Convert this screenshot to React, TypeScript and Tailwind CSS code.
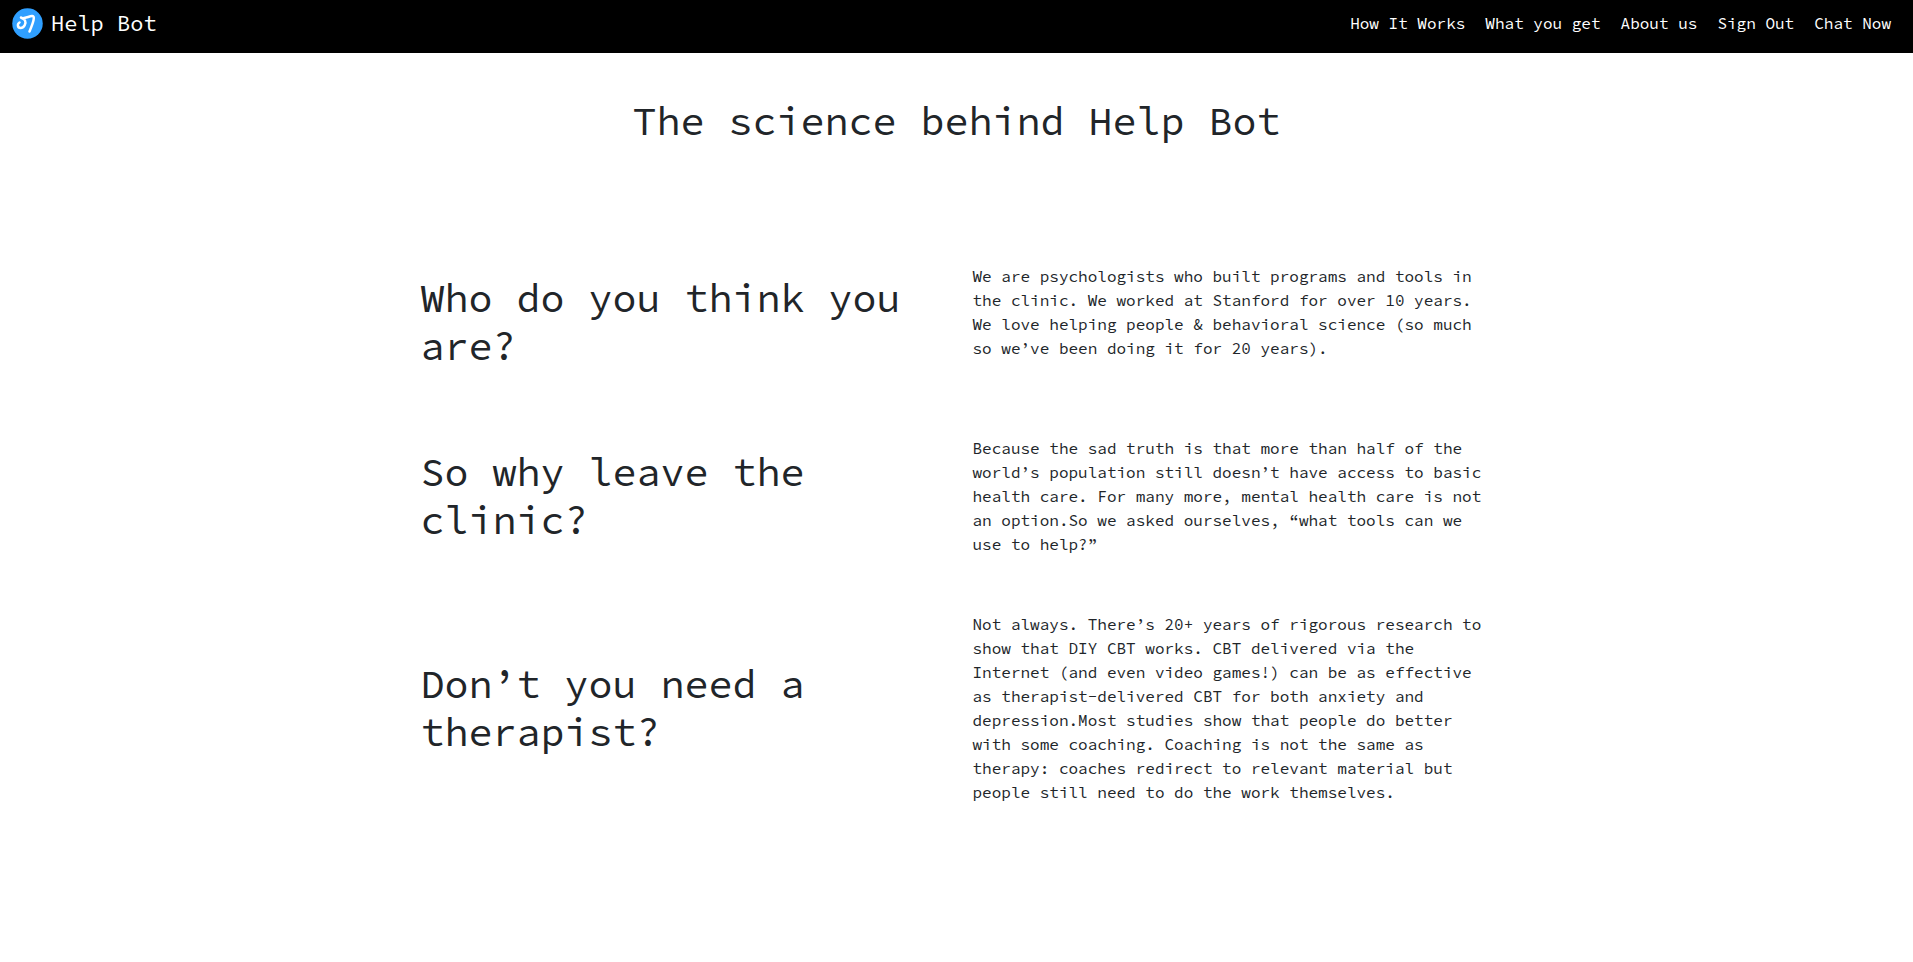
const links = ["How It Works", "What you get", "About us", "Sign Out", "Chat Now"];

const sections = [
  {
    title: "Who do you think you are?",
    body: "We are psychologists who built programs and tools in the clinic. We worked at Stanford for over 10 years. We love helping people & behavioral science (so much so we’ve been doing it for 20 years).",
    bodyClass: "pb-5",
  },
  {
    title: "So why leave the clinic?",
    body: "Because the sad truth is that more than half of the world’s population still doesn’t have access to basic health care. For many more, mental health care is not an option.So we asked ourselves, “what tools can we use to help?”",
    bodyClass: "",
  },
  {
    title: "Don’t you need a therapist?",
    body: "Not always. There’s 20+ years of rigorous research to show that DIY CBT works. CBT delivered via the Internet (and even video games!) can be as effective as therapist-delivered CBT for both anxiety and depression.Most studies show that people do better with some coaching. Coaching is not the same as therapy: coaches redirect to relevant material but people still need to do the work themselves.",
    bodyClass: "",
  },
];

function Logo() {
  return (
    <svg viewBox="0 0 62 62" className="size-[31px]" aria-hidden="true">
      <circle cx="31" cy="31" r="30.5" fill="#2f9fff" />
      <path
        d="M15 29C10 32 11 40 17 40C24 40 29 31 26 25C24 21 20 21 18 19C22 23 33 17 40 16C47 15 43 28 35 47"
        fill="none"
        stroke="#fff"
        strokeWidth="5"
        strokeLinecap="round"
        strokeLinejoin="round"
      />
    </svg>
  );
}

export default function App() {
  return (
    <div className="min-h-screen bg-white font-['Source_Code_Pro','Liberation_Mono',monospace] text-base text-[#212529]">
      <header className="flex h-[53px] items-center justify-between bg-black pr-[22px] pb-[7px] pl-3 text-white">
        <a href="#" className="flex items-center gap-2">
          <Logo />
          <span className="text-[22px] leading-8">Help Bot</span>
        </a>
        <nav className="flex gap-5">
          {links.map((link) => (
            <a key={link} href="#">
              {link}
            </a>
          ))}
        </nav>
      </header>
      <main className="px-6 pt-11 pb-20">
        <h1 className="text-center text-[40px] leading-12">The science behind Help Bot</h1>
        <div className="mx-auto mt-[119px] flex max-w-[1072px] flex-col gap-14">
          {sections.map((section) => (
            <section key={section.title} className="grid grid-cols-2 items-center gap-8">
              <h2 className="text-[40px] leading-12">{section.title}</h2>
              <p className={section.bodyClass}>{section.body}</p>
            </section>
          ))}
        </div>
      </main>
    </div>
  );
}
